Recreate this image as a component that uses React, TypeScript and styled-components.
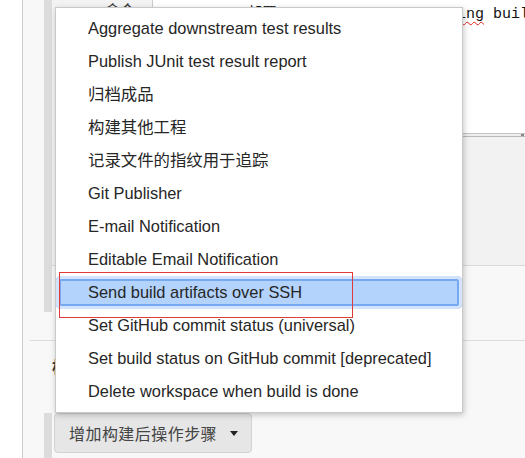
import React from "react";
import styled, { createGlobalStyle } from "styled-components";

const GlobalStyle = createGlobalStyle`
  html, body { margin: 0; padding: 0; background: #fff; }
  body { font-family: "Liberation Sans", Arial, "Noto Sans CJK SC", sans-serif; }
  * { box-sizing: border-box; }
`;

const Page = styled.div`
  position: relative;
  display: flex;
  width: 525px;
  height: 458px;
  overflow: hidden;
  background: #fff;
`;

const Gutter = styled.div`
  width: 23px;
  flex: none;
  background: #fff;
  border-right: 1px solid #cdcdcd;
`;

const Main = styled.div`
  flex: 1;
  min-width: 0;
  background: #f8f8f8;
  display: flex;
  flex-direction: column;
`;

const StepPanel = styled.div`
  margin-left: 21px;
  border-left: 8px solid #dcdcdc;
  height: 312px;
  display: flex;
  flex-direction: column;
  background: #f2f2f2;
  flex: none;
`;

const CommandRow = styled.div`
  display: grid;
  grid-template-columns: 101px 1fr;
  height: 137px;
  flex: none;
`;

const LabelCell = styled.div`
  border-right: 1px solid #cccccc;
  background: #f3f3f3;
  padding: 2px 0 0 53px;
  font: 15px/16px "Noto Sans CJK SC", sans-serif;
  color: #333;
`;

const CodeArea = styled.div`
  background: #fff;
  display: flex;
  flex-direction: column;
  min-width: 0;
`;

const CodeText = styled.div`
  flex: 1;
  padding: 6px 0 0 4px;
  font: 15px/17px "Liberation Mono", "Noto Sans CJK SC", monospace;
  color: #111;
  white-space: pre;
  overflow: hidden;
`;

const Misspelled = styled.span`
  text-decoration: underline wavy #e02020;
  text-decoration-thickness: 1px;
  text-underline-offset: 3px;
`;

const ScrollEdge = styled.div`
  height: 4px;
  border-top: 1px solid #c4c4c4;
  border-bottom: 1px solid #b8b8b8;
  background: #ededed;
  display: flex;
  justify-content: flex-end;
  align-items: center;
  padding-right: 1px;
`;

const Grip = styled.span`
  width: 3px;
  height: 2px;
  border-top: 1px solid #888;
  border-bottom: 1px solid #888;
`;

const Filler = styled.div`
  height: 129px;
  flex: none;
  border-bottom: 1px solid #dadada;
`;

const PanelFooter = styled.div`
  flex: 1;
  background: #f8f8f8;
`;

const Divider = styled.div`
  margin: 28px 0 0 7px;
  border-top: 1px solid #dcdcdc;
  flex: none;
`;

const PostSection = styled.div`
  height: 72px;
  flex: none;
  padding: 15px 0 0 29px;
  font: bold 16px/20px "Noto Sans CJK SC", sans-serif;
  color: #333;
`;

const ButtonBlock = styled.div`
  flex: 1;
  margin-left: 21px;
  border-left: 8px solid #dcdcdc;
  padding-left: 2px;
  display: flex;
  align-items: flex-start;
`;

const AddButton = styled.div`
  height: 40px;
  display: flex;
  align-items: center;
  gap: 13px;
  padding: 0 13px 0 14px;
  background: #e6e6e6;
  border: 1px solid #d2d2d2;
  border-radius: 4px;
  font: 16px/20px "Noto Sans CJK SC", sans-serif;
  letter-spacing: 0.45px;
  color: #444;
`;

const Caret = styled.span`
  width: 0;
  height: 0;
  border-left: 4px solid transparent;
  border-right: 4px solid transparent;
  border-top: 5px solid #222;
`;

const Menu = styled.ul`
  position: absolute;
  left: 55px;
  top: 7px;
  width: 408px;
  margin: 0;
  padding: 4px 0;
  list-style: none;
  background: #fff;
  border: 1px solid #c9c9c9;
  box-shadow: 1px 2px 6px rgba(0, 0, 0, 0.22);
`;

const MenuItem = styled.li<{ $active?: boolean }>`
  height: 33px;
  padding-left: 32px;
  font: 16.4px/33px "Liberation Sans", Arial, "Noto Sans CJK SC", sans-serif;
  color: #262626;
  white-space: nowrap;
  background: ${(p) => (p.$active ? "#b3d3fc" : "transparent")};
  border-radius: ${(p) => (p.$active ? "5px" : "0")};
  box-shadow: ${(p) =>
    p.$active ? "inset 0 0 0 3px #d3e4fc, inset 0 0 0 5px #77a9f1" : "none"};
`;

const RedMark = styled.div`
  position: absolute;
  left: 3px;
  top: 264px;
  width: 294px;
  height: 46px;
  border: 1px solid #e03a3a;
  pointer-events: none;
`;

const items = [
  "Aggregate downstream test results",
  "Publish JUnit test result report",
  "归档成品",
  "构建其他工程",
  "记录文件的指纹用于追踪",
  "Git Publisher",
  "E-mail Notification",
  "Editable Email Notification",
  "Send build artifacts over SSH",
  "Set GitHub commit status (universal)",
  "Set build status on GitHub commit [deprecated]",
  "Delete workspace when build is done",
];

export default function App() {
  return (
    <>
      <GlobalStyle />
      <Page>
        <Gutter />
        <Main>
          <StepPanel>
            <CommandRow>
              <LabelCell>命令</LabelCell>
              <CodeArea>
                <CodeText>
                  {'echo "==> 部署 to server: '}
                  <Misspelled>redeploying</Misspelled>
                  {" build..."}
                </CodeText>
                <ScrollEdge>
                  <Grip />
                </ScrollEdge>
              </CodeArea>
            </CommandRow>
            <Filler />
            <PanelFooter />
          </StepPanel>
          <Divider />
          <PostSection>构建后操作</PostSection>
          <ButtonBlock>
            <AddButton>
              增加构建后操作步骤
              <Caret />
            </AddButton>
          </ButtonBlock>
        </Main>
        <Menu>
          {items.map((t) => (
            <MenuItem key={t} $active={t === "Send build artifacts over SSH"}>
              {t}
            </MenuItem>
          ))}
          <RedMark />
        </Menu>
      </Page>
    </>
  );
}
